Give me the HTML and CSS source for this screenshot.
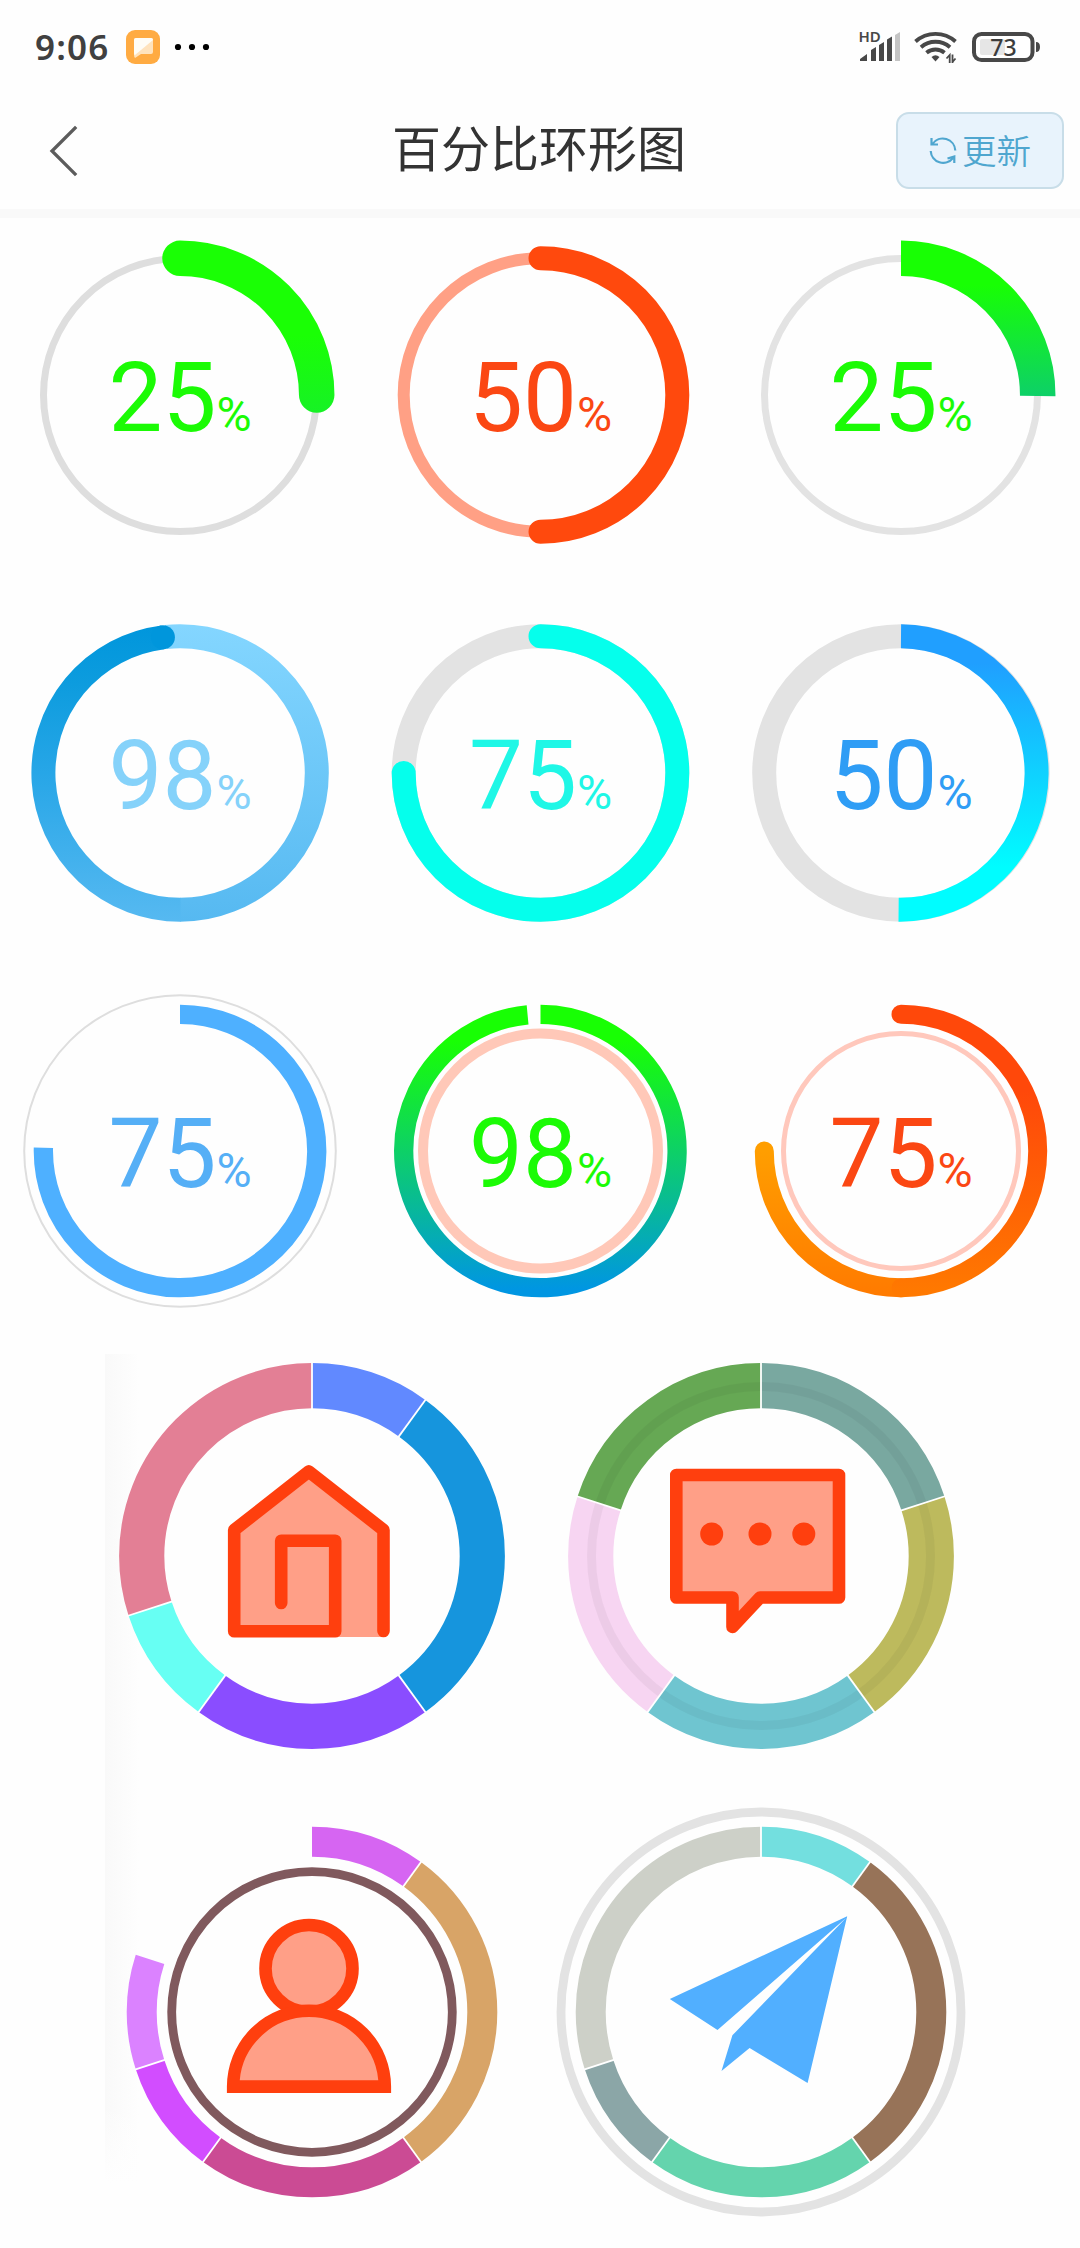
FILE: index.html
```html
<!DOCTYPE html>
<html lang="zh">
<head>
<meta charset="utf-8">
<title>百分比环形图</title>
<link rel="stylesheet" href="styles.css">
</head>
<body>
<div class="status">
  <span class="clock">9:06</span>
  <svg class="app-badge" width="34" height="34" viewBox="0 0 34 34">
    <rect width="34" height="34" rx="9" fill="#ffab42"/>
    <path d="M10 8H25Q27 8 27 10V22Q27 24 25 24H15L9 28Q8 27 8 25V10Q8 8 10 8Z" fill="#ffe3bd"/>
    <path d="M10 8H25Q27 8 27 10L9 25Q8 25 8 23V10Q8 8 10 8Z" fill="#fffdf6"/>
  </svg>
  <svg class="more" width="36" height="8" viewBox="0 0 36 8">
    <circle cx="4" cy="4" r="3.1"/><circle cx="18" cy="4" r="3.1"/><circle cx="32" cy="4" r="3.1"/>
  </svg>
  <div class="spacer"></div>
  <svg class="signal" width="50" height="50" viewBox="-5 -8 50 50">
    <text class="hd" x="-1.500" y="11.500">HD</text>
    <path fill="#484848" d="M0 31V29L7 24V31ZM11 31V20L16 17V31ZM19 31V15L24 12V31ZM27 31V9.500L32 6.500V31Z"/>
    <path fill="#c4c4c4" d="M35 31V5L40 2V31Z"/>
  </svg>
  <svg class="wifi" width="44" height="36" viewBox="0 0 44 36">
    <g fill="none" stroke="#484848" stroke-width="3.900">
      <path d="M1.500 12.500A30 30 0 0 1 41.500 12.500"/>
      <path d="M7 18.200A22 22 0 0 1 36 18.200"/>
      <path d="M12.500 23.800A14 14 0 0 1 30.500 23.800"/>
    </g>
    <path fill="#484848" d="M17.500 28Q21.500 24.500 25.500 28L21.500 32.500Z"/>
    <path fill="none" stroke="#484848" stroke-width="1.800" d="M32.500 29.500L35.700 26V34M38.500 34V25.500M38.500 33L41.500 29.500"/>
  </svg>
  <svg class="battery" width="70" height="34" viewBox="0 0 70 34">
    <rect x="2" y="4" width="58.500" height="26" rx="7.500" fill="#fff" stroke="#484848" stroke-width="4"/>
    <rect x="8" y="9" width="25" height="16" rx="2" fill="#e6e6e6"/>
    <path d="M64 12Q68 12 68 17T64 22Z" fill="#484848"/>
    <text class="level" x="31.500" y="25.500" text-anchor="middle">73</text>
  </svg>
</div>

<header class="header">
  <svg class="back" width="30" height="52" viewBox="0 0 30 52">
    <path d="M26 3L3 26L26 49" fill="none" stroke="#5c5c5c" stroke-width="3.300" stroke-linecap="square"/>
  </svg>
  <h1 class="title">百分比环形图</h1>
  <button class="refresh">
    <svg width="28" height="30" viewBox="0 0 28 30" fill="none" stroke="#4fa6cf" stroke-width="2.200">
      <path d="M3.500 8A12.500 12.500 0 0 1 26.300 14.500M1.700 15A12.500 12.500 0 0 0 24 22M2.500 2V8.500H9M25.300 27V20.500L18.500 22.500"/>
    </svg>
    <span>更新</span>
  </button>
</header>

<main>
<section class="gauges">
  <svg class="gauge lime" viewBox="-180 -170 360 340">
    <defs><linearGradient id="limeSoft" gradientUnits="userSpaceOnUse" x1="0" y1="-60" x2="0" y2="30"><stop offset="0" stop-color="#1aff05"/><stop offset="1" stop-color="#16f02a"/></linearGradient></defs>
    <circle r="136.500" class="track" stroke-width="7"/>
    <path class="arc round" stroke="url(#limeSoft)" stroke-width="35.500" d="M0 -136.700A136.700 136.700 0 0 1 136.700 0"/>
    <text x="0" y="36">25<tspan class="unit">%</tspan></text>
  </svg>
  <svg class="gauge red" viewBox="-180.500 -170 360 340">
    <circle r="136.800" class="arc" stroke="#ffa085" stroke-width="12"/>
    <path class="arc round" stroke="#ff490d" stroke-width="24" d="M0 -136.800A136.800 136.800 0 0 1 0 136.800"/>
    <text x="0" y="36">50<tspan class="unit">%</tspan></text>
  </svg>
  <svg class="gauge lime" viewBox="-181 -170 360 340">
    <defs><linearGradient id="limeBlue" gradientUnits="userSpaceOnUse" x1="0" y1="-110" x2="0" y2="138"><stop offset="0" stop-color="#18ff04"/><stop offset="1" stop-color="#0096e2"/></linearGradient></defs>
    <circle r="136.500" class="track pale" stroke-width="7"/>
    <path class="arc" stroke="url(#limeBlue)" stroke-width="35.500" d="M0 -136.700A136.700 136.700 0 0 1 136.700 1"/>
    <text x="0" y="36">25<tspan class="unit">%</tspan></text>
  </svg>

  <svg class="gauge sky" viewBox="-180 -170 360 340">
    <defs>
      <linearGradient id="skyRight" gradientUnits="userSpaceOnUse" x1="0" y1="-148" x2="0" y2="148"><stop offset="0" stop-color="#84d6ff"/><stop offset="1" stop-color="#56b9f1"/></linearGradient>
      <linearGradient id="skyLeft" gradientUnits="userSpaceOnUse" x1="0" y1="-148" x2="0" y2="148"><stop offset="0" stop-color="#0096dc"/><stop offset=".2" stop-color="#0d9cde"/><stop offset=".5" stop-color="#27a6e7"/><stop offset="1" stop-color="#56b9f1"/></linearGradient>
    </defs>
    <path class="arc" stroke="url(#skyRight)" stroke-width="24" d="M-14 -136A136.800 136.800 0 0 1 0 -136.800A136.800 136.800 0 0 1 0 136.800"/>
    <path class="arc" stroke="url(#skyLeft)" stroke-width="24" d="M.5 136.800A136.800 136.800 0 0 1 -17.100 -135.700"/>
    <circle cx="-17.100" cy="-135.700" r="12" fill="#0096dc"/>
    <text x="0" y="36">98<tspan class="unit">%</tspan></text>
  </svg>
  <svg class="gauge cyan" viewBox="-180.500 -170 360 340">
    <circle r="136.800" class="track pale" stroke-width="24"/>
    <path class="arc round" stroke="#05ffec" stroke-width="24" d="M0 -136.800A136.800 136.800 0 1 1 -136.800 0"/>
    <text x="0" y="36">75<tspan class="unit">%</tspan></text>
  </svg>
  <svg class="gauge azure" viewBox="-181 -170 360 340">
    <defs><linearGradient id="azure" gradientUnits="userSpaceOnUse" x1="0" y1="-110" x2="0" y2="95"><stop offset="0" stop-color="#209fff"/><stop offset="1" stop-color="#00fdff"/></linearGradient></defs>
    <circle r="136.800" class="track pale" stroke-width="24"/>
    <path class="arc" stroke="url(#azure)" stroke-width="24" d="M0 -136.800A136.800 136.800 0 1 1 -2.400 136.800"/>
    <text x="0" y="36">50<tspan class="unit">%</tspan></text>
  </svg>

  <svg class="gauge blue" viewBox="-180 -170 360 340">
    <circle r="155.800" class="track" stroke-width="2"/>
    <path class="arc" stroke="#4eb0ff" stroke-width="19.300" d="M0 -136.700A136.700 136.700 0 1 1 -136.600 -3.200"/>
    <text x="0" y="36">75<tspan class="unit">%</tspan></text>
  </svg>
  <svg class="gauge lime" viewBox="-180.500 -170 360 340">
    <circle r="117.500" class="arc" stroke="#ffc8b8" stroke-width="10"/>
    <path class="arc" stroke="url(#limeBlue)" stroke-width="19.300" d="M0 -136.700A136.700 136.700 0 1 1 -12.900 -136.100"/>
    <text x="0" y="36">98<tspan class="unit">%</tspan></text>
  </svg>
  <svg class="gauge red" viewBox="-181 -170 360 340">
    <defs>
      <linearGradient id="fireRight" gradientUnits="userSpaceOnUse" x1="0" y1="-60" x2="0" y2="146"><stop offset="0" stop-color="#ff480a"/><stop offset="1" stop-color="#ff7a00"/></linearGradient>
      <linearGradient id="fireLeft" gradientUnits="userSpaceOnUse" x1="0" y1="0" x2="0" y2="146"><stop offset="0" stop-color="#ff9e00"/><stop offset="1" stop-color="#ff7a00"/></linearGradient>
    </defs>
    <circle r="117.500" class="arc" stroke="#ffc8bc" stroke-width="5"/>
    <path class="arc round" stroke="url(#fireLeft)" stroke-width="19" d="M0 136.700A136.700 136.700 0 0 1 -136.700 0"/>
    <path class="arc round" stroke="url(#fireRight)" stroke-width="19" d="M0 -136.700A136.700 136.700 0 0 1 0 136.700"/>
    <text x="0" y="36">75<tspan class="unit">%</tspan></text>
  </svg>
</section>

<section class="donuts">
  <svg class="donut" viewBox="-224 -228 448.500 456">
    <g class="slices" stroke-width="45.200">
      <circle r="170.300" pathLength="100" stroke="#6189ff" stroke-dasharray="10 90"/>
      <circle r="170.300" pathLength="100" stroke="#1695dd" stroke-dasharray="30 70" stroke-dashoffset="-10"/>
      <circle r="170.300" pathLength="100" stroke="#8a4dff" stroke-dasharray="20 80" stroke-dashoffset="-40"/>
      <circle r="170.300" pathLength="100" stroke="#67fff3" stroke-dasharray="10 90" stroke-dashoffset="-60"/>
      <circle r="170.300" pathLength="100" stroke="#e37f95" stroke-dasharray="30 70" stroke-dashoffset="-70"/>
    </g>
    <g class="dividers">
      <path d="M0 -146V-195"/><path d="M0 -146V-195" transform="rotate(36)"/><path d="M0 -146V-195" transform="rotate(144)"/><path d="M0 -146V-195" transform="rotate(216)"/><path d="M0 -146V-195" transform="rotate(252)"/>
    </g>
    <path d="M74 81V-26L-3.200 -84L-77.800 -26V81Z" fill="#ff9f87"/>
    <path class="line" d="M71.500 75V-26L-3.200 -84.500L-77.800 -26V75.300H23.200V-15.300H-30.800V47"/>
  </svg>
  <svg class="donut" viewBox="-224 -228 448.500 456">
    <g class="slices" stroke-width="45.200">
      <circle r="170.300" pathLength="100" stroke="#79a8a0" stroke-dasharray="20 80"/>
      <circle r="170.300" pathLength="100" stroke="#bdba5d" stroke-dasharray="20 80" stroke-dashoffset="-20"/>
      <circle r="170.300" pathLength="100" stroke="#6fc5d0" stroke-dasharray="20 80" stroke-dashoffset="-40"/>
      <circle r="170.300" pathLength="100" stroke="#f7d5f2" stroke-dasharray="20 80" stroke-dashoffset="-60"/>
      <circle r="170.300" pathLength="100" stroke="#66a854" stroke-dasharray="20 80" stroke-dashoffset="-80"/>
    </g>
    <circle r="169.500" fill="none" stroke="#000" stroke-opacity=".045" stroke-width="9"/>
    <g class="dividers">
      <path d="M0 -146V-195"/><path d="M0 -146V-195" transform="rotate(72)"/><path d="M0 -146V-195" transform="rotate(144)"/><path d="M0 -146V-195" transform="rotate(216)"/><path d="M0 -146V-195" transform="rotate(288)"/>
    </g>
    <path class="line filled" d="M-84.700 -81H78V41.500H-1L-28.500 71V41.500H-84.700Z"/>
    <g fill="#ff3f0e"><circle cx="-49.300" cy="-22" r="11.500"/><circle cx="-1" cy="-22" r="11.500"/><circle cx="42.800" cy="-22" r="11.500"/></g>
  </svg>
  <svg class="donut" viewBox="-224 -228 448.500 456">
    <g class="slices" stroke-width="30">
      <circle r="170.300" pathLength="100" stroke="#d665f2" stroke-dasharray="10 90"/>
      <circle r="170.300" pathLength="100" stroke="#d8a467" stroke-dasharray="30 70" stroke-dashoffset="-10"/>
      <circle r="170.300" pathLength="100" stroke="#cb4b94" stroke-dasharray="20 80" stroke-dashoffset="-40"/>
      <circle r="170.300" pathLength="100" stroke="#d24dff" stroke-dasharray="10 90" stroke-dashoffset="-60"/>
      <circle r="170.300" pathLength="100" stroke="#db82ff" stroke-dasharray="10 90" stroke-dashoffset="-70"/>
    </g>
    <g class="dividers">
      <path d="M0 -154V-187" transform="rotate(36)"/><path d="M0 -154V-187" transform="rotate(144)"/><path d="M0 -154V-187" transform="rotate(216)"/><path d="M0 -154V-187" transform="rotate(252)"/>
    </g>
    <circle r="140.300" fill="none" stroke="#80595d" stroke-width="8.800"/>
    <g class="line filled sharp">
      <circle cx="-3" cy="-43.500" r="43.500"/>
      <path d="M-78.800 74.600A75.800 75.800 0 0 1 72.800 74.600Z"/>
    </g>
  </svg>
  <svg class="donut" viewBox="-224 -228 448.500 456">
    <circle r="200" fill="none" stroke="#e3e3e3" stroke-width="8.800"/>
    <g class="slices" stroke-width="30">
      <circle r="170.300" pathLength="100" stroke="#73dfdf" stroke-dasharray="10 90"/>
      <circle r="170.300" pathLength="100" stroke="#977358" stroke-dasharray="30 70" stroke-dashoffset="-10"/>
      <circle r="170.300" pathLength="100" stroke="#64d4ad" stroke-dasharray="20 80" stroke-dashoffset="-40"/>
      <circle r="170.300" pathLength="100" stroke="#8ba6a7" stroke-dasharray="10 90" stroke-dashoffset="-60"/>
      <circle r="170.300" pathLength="100" stroke="#cdd0c8" stroke-dasharray="30 70" stroke-dashoffset="-70"/>
    </g>
    <g class="dividers">
      <path d="M0 -154V-187"/><path d="M0 -154V-187" transform="rotate(36)"/><path d="M0 -154V-187" transform="rotate(144)"/><path d="M0 -154V-187" transform="rotate(216)"/><path d="M0 -154V-187" transform="rotate(252)"/>
    </g>
    <path fill="#51afff" d="M86.200 -95.700L-91.200 -13L-43.500 18L85 -94L-28.600 23.300L-39.500 59L-11.400 36L46.600 71Z"/>
  </svg>
</section>
</main>
</body>
</html>
```
FILE: styles.css
```css
* { box-sizing: border-box; }

body {
  margin: 0;
  width: 1080px;
  height: 2248px;
  overflow: hidden;
  background: #fefefe;
  font-family: "Noto Sans", "Noto Sans CJK SC", sans-serif;
}

svg { display: block; flex: none; }

.status {
  display: flex;
  align-items: center;
  height: 94px;
  padding: 0 38px 0 35px;
}
.clock {
  width: 91px;
  font-size: 35px;
  font-weight: 600;
  line-height: 92px;
  letter-spacing: 1.2px;
  color: #404040;
}
.more { margin-left: 14px; }
.spacer { flex: 1; }
.signal { margin-right: 9px; }
.wifi { margin-right: 14px; }
.hd { font: 600 15px "Noto Sans", sans-serif; fill: #484848; }
.level { font: 500 23px "Noto Sans", sans-serif; fill: #3c3c3c; }

.header {
  display: grid;
  grid-template-columns: 200px 1fr 200px;
  align-items: center;
  height: 124px;
  padding: 0 16px 2px 49px;
  border-bottom: 9px solid #f9f9f9;
}
.title {
  margin: 0 0 10px -35px;
  text-align: center;
  font: 400 49px/60px "Noto Sans CJK SC", sans-serif;
  color: #333;
}
.refresh {
  display: flex;
  justify-self: end;
  align-items: center;
  gap: 5px;
  width: 168px;
  height: 77px;
  padding: 0 0 0 31px;
  border: 2.5px solid #c8dde8;
  border-radius: 13px;
  background: #e8f3fc;
  font: 350 34.5px/40px "Noto Sans CJK SC", sans-serif;
  color: #4fa6cf;
}
.refresh span { margin-top: -3px; }

.gauges {
  display: grid;
  grid-template-columns: repeat(3, 360px);
  grid-auto-rows: 340px;
  row-gap: 38px;
  padding-top: 7px;
}
.gauge { width: 360px; height: 340px; }
.gauge text {
  font-family: Roboto, sans-serif;
  font-size: 96px;
  text-anchor: middle;
}
.gauge .unit { font-size: 48px; }
.track { fill: none; stroke: #dedede; }
.track.pale { stroke: #e3e3e3; }
.arc { fill: none; }
.round { stroke-linecap: round; }
.lime text { fill: #1bfb05; }
.red text { fill: #fb4713; }
.sky text { fill: #85d2fa; }
.cyan text { fill: #1ff7e6; }
.azure text { fill: #2f9df5; }
.blue text { fill: #55aff6; }

.donuts {
  display: grid;
  grid-template-columns: 448.5px 448.5px;
  grid-auto-rows: 456px;
  margin: 7px 0 0 88px;
  background:
    linear-gradient(#fefefe00, #fefefe) 17px 776px / 34px 80px no-repeat,
    linear-gradient(90deg, #f9f9f9, #fefefe) 17px 26px / 34px 830px no-repeat;
}
.donut { width: 448.5px; height: 456px; }
.slices { fill: none; }
.slices circle { transform: rotate(-90deg); }
.dividers { stroke: #fff; stroke-width: 1.8; }
.line {
  fill: none;
  stroke: #ff3f0e;
  stroke-width: 12.6;
  stroke-linecap: round;
  stroke-linejoin: round;
}
.line.filled { fill: #ff9f87; }
.line.sharp { stroke-linejoin: miter; }
```
